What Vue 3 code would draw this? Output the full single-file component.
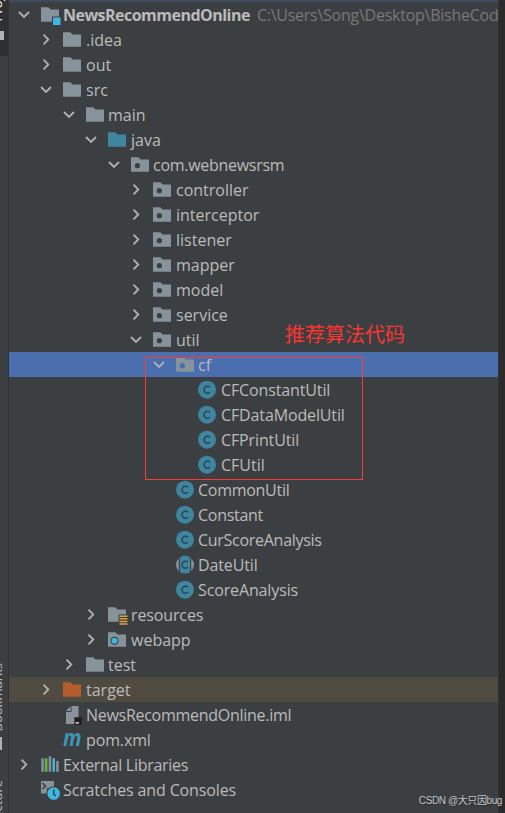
<script setup>
const folder = 'folder';
const pkg = 'package';

const rows = [
  { name: 'NewsRecommendOnline', level: 0, icon: 'module', arrow: 'down', path: 'C:\\Users\\Song\\Desktop\\BisheCode' },
  { name: '.idea', level: 1, icon: folder, arrow: 'right' },
  { name: 'out', level: 1, icon: folder, arrow: 'right' },
  { name: 'src', level: 1, icon: folder, arrow: 'down' },
  { name: 'main', level: 2, icon: folder, arrow: 'down' },
  { name: 'java', level: 3, icon: 'source', arrow: 'down' },
  { name: 'com.webnewsrsm', level: 4, icon: pkg, arrow: 'down', tight: true },
  { name: 'controller', level: 5, icon: pkg, arrow: 'right' },
  { name: 'interceptor', level: 5, icon: pkg, arrow: 'right' },
  { name: 'listener', level: 5, icon: pkg, arrow: 'right' },
  { name: 'mapper', level: 5, icon: pkg, arrow: 'right' },
  { name: 'model', level: 5, icon: pkg, arrow: 'right' },
  { name: 'service', level: 5, icon: pkg, arrow: 'right' },
  { name: 'util', level: 5, icon: pkg, arrow: 'down' },
  { name: 'cf', level: 6, icon: pkg, arrow: 'down', state: 'selected' },
  { name: 'CFConstantUtil', level: 7, icon: 'class', snug: true },
  { name: 'CFDataModelUtil', level: 7, icon: 'class', snug: true },
  { name: 'CFPrintUtil', level: 7, icon: 'class', snug: true },
  { name: 'CFUtil', level: 7, icon: 'class' },
  { name: 'CommonUtil', level: 6, icon: 'class', tight: true },
  { name: 'Constant', level: 6, icon: 'class', tight: true },
  { name: 'CurScoreAnalysis', level: 6, icon: 'class', tight: true },
  { name: 'DateUtil', level: 6, icon: 'abstract', snug: true },
  { name: 'ScoreAnalysis', level: 6, icon: 'class', snug: true },
  { name: 'resources', level: 3, icon: 'resources', arrow: 'right', snug: true },
  { name: 'webapp', level: 3, icon: 'web', arrow: 'right' },
  { name: 'test', level: 2, icon: folder, arrow: 'right' },
  { name: 'target', level: 1, icon: 'excluded', arrow: 'right', state: 'ignored' },
  { name: 'NewsRecommendOnline.iml', level: 1, icon: 'iml', tight: true },
  { name: 'pom.xml', level: 1, icon: 'maven', snug: true },
  { name: 'External Libraries', level: 0, icon: 'libraries', arrow: 'right', tight: true },
  { name: 'Scratches and Consoles', level: 0, icon: 'scratches', snug: true }
];

const folderLike = ['folder', 'package', 'module', 'source', 'resources', 'web', 'excluded'];
const isFolder = (icon) => folderLike.includes(icon);

// Each level is 22.5px deep, kept on whole pixels so icons stay crisp
const indent = (level) => `${Math.floor(level * 22.5) + 8}px`;
</script>

<template>
  <div class="window">
    <aside class="stripe">
      <div class="stripe-tab">
        <span class="tab-text">Project</span>
        <i class="tab-icon"></i>
      </div>
      <div class="stripe-bottom">
        <span class="tab-text">Bookmarks</span>
        <i class="tab-icon"></i>
        <span class="tab-text">Structure</span>
      </div>
    </aside>

    <main class="tree">
      <div
        v-for="row in rows"
        :key="row.name"
        class="row"
        :class="[row.state, { root: row.path, snug: row.snug, tight: row.tight, odd: row.level % 2 }]"
        :style="{ paddingLeft: indent(row.level) }"
      >
        <svg class="arrow" viewBox="0 0 14 14">
          <path v-if="row.arrow === 'down'" d="M2 4 7 9l5-5" />
          <path v-if="row.arrow === 'right'" d="M4.500 1.700 9.300 6.500l-4.800 4.800" />
        </svg>

        <svg class="icon" :class="row.icon" viewBox="0 0 20 21">
          <template v-if="isFolder(row.icon)">
            <path class="shape" d="M0 3.300h7.300l2.300 2.200H18v12.300H0z" />
            <circle v-if="row.icon === 'package'" class="hole" cx="6.400" cy="11.700" r="2.600" />
            <path v-if="row.icon === 'module'" class="gap" d="M11 12.500h9V21h-9z" />
            <path v-if="row.icon === 'module'" class="cyan" d="M12 13.500h7.500V21H12z" />
            <template v-if="row.icon === 'resources'">
              <path class="gap" d="M10.500 10.500H20V21h-9.500z" />
              <path class="lines" d="M11.500 12.200h8M11.500 14.800h8M11.500 17.400h8M11.500 20h8" />
            </template>
            <template v-if="row.icon === 'web'">
              <circle class="hole" cx="6.500" cy="11.700" r="4" />
              <circle class="cyan" cx="6.500" cy="11.700" r="3" />
            </template>
          </template>
          <template v-else-if="row.icon === 'class'">
            <circle class="disc" cx="9" cy="10.700" r="9" />
            <path class="letter" d="M12 8.300A3.500 3.500 0 1 0 12 13.100" />
          </template>
          <template v-else-if="row.icon === 'abstract'">
            <path class="disc" d="M4 3.200q5-2.800 10 0v15q-5 2.800-10 0z" />
            <path class="bracket" d="M2.800 4.200q-5.600 6.500 0 13zM15.200 4.200q5.600 6.500 0 13z" />
            <path class="letter" d="M12 8.300A3.500 3.500 0 1 0 12 13.100" />
          </template>
          <template v-else-if="row.icon === 'iml'">
            <path class="shape" d="M8.500 2H15.500V20H3V8h5.500z" />
            <path class="shape" d="M3 7 7.500 2.300V7z" />
            <path class="black" d="M11.300 13.300h7.500v7.500h-7.500z" />
            <path class="white" d="M12.500 18.300h3.500v1.200h-3.500z" />
          </template>
          <text v-else-if="row.icon === 'maven'" class="maven-letter" x="0" y="17.300" textLength="18.500" lengthAdjust="spacingAndGlyphs">m</text>
          <template v-else-if="row.icon === 'libraries'">
            <path class="shape" d="M.300 4.300h2.500v13.400H.300zM7.700 2.300h2.500v15.400H7.700zM15.200 7h2.500v10.700h-2.500z" />
            <path class="green" d="M3.700 4.300h2.800v13.400H3.700z" />
            <path class="cyan" d="M11.500 4.300H14v13.400h-2.500z" />
          </template>
          <template v-else>
            <path class="shape" d="M0 2h13v12.500H0z" />
            <path class="prompt" d="m1.500 4 3 3-3 3M5.500 10h3" />
            <circle class="gap" cx="12.700" cy="14.500" r="7.300" />
            <circle class="cyan" cx="12.700" cy="14.500" r="6.300" />
            <path class="hand" d="M12.700 10.500V15l2 2" />
          </template>
        </svg>

        <span class="name">{{ row.name }}</span>
        <span v-if="row.path" class="path">{{ row.path }}</span>
      </div>

      <div class="frame"></div>
      <div class="note">推荐算法代码</div>
    </main>
    <div class="edge"></div>
    <div class="watermark">CSDN @大只因bug</div>
  </div>
</template>

<style>
body {
  background: #3c3f41;
}
</style>

<style scoped>
.window {
  position: relative;
  display: flex;
  width: 505px;
  height: 813px;
  overflow: hidden;
  background: #3c3f41;
  color: #bbbbbb;
  font-family: "Open Sans", "Noto Sans", sans-serif;
  font-size: 16px;
}

.stripe {
  display: flex;
  flex: none;
  flex-direction: column;
  justify-content: space-between;
  box-sizing: border-box;
  width: 9px;
  border-right: 1px solid #323232;
  overflow: hidden;
}

.stripe-tab {
  display: flex;
  flex-direction: column;
  align-items: flex-end;
  justify-content: flex-end;
  height: 56px;
  background: #2d2f30;
  color: #ffffff;
}

.stripe-bottom {
  display: flex;
  flex-direction: column;
  align-items: flex-end;
  height: 150px;
}

.tab-text {
  flex: none;
  width: 20px;
  margin-right: 1px;
  font-size: 13px;
  line-height: 20px;
  white-space: nowrap;
  writing-mode: vertical-rl;
  transform: rotate(180deg);
}

.tab-icon {
  flex: none;
  width: 4px;
  height: 9px;
  margin: 10px 4px 16px 0;
  background: #afb1b3;
}

.stripe-bottom .tab-icon {
  width: 2px;
  height: 13px;
  margin: 6px 6px 30px 0;
}

.tree {
  position: relative;
  flex: 1;
  min-width: 0;
  overflow: hidden;
  border-top: 2px solid #3d4b5c;
}

.row {
  display: flex;
  align-items: center;
  box-sizing: border-box;
  height: 25px;
  white-space: nowrap;
}

.row.selected {
  background: #4b6eaf;
}

.row.ignored {
  background: #4f4b41;
}

.arrow {
  flex: none;
  width: 14px;
  height: 14px;
  margin-right: 10px;
  fill: none;
  stroke: #afb1b3;
  stroke-width: 1.8;
}

.icon {
  flex: none;
  width: 20px;
  height: 21px;
  margin-right: 2px;
}

.odd .icon {
  margin-right: 3px;
}

.name,
.path {
  margin-top: 2px;
  line-height: 25px;
}

.snug .name {
  letter-spacing: -0.13px;
}

.tight .name {
  letter-spacing: -0.28px;
}

.root .name {
  font-weight: 700;
  letter-spacing: -0.52px;
}

.path {
  margin-left: 7px;
  color: #787878;
  letter-spacing: -0.25px;
}

.shape {
  fill: #87939a;
}

.source .shape {
  fill: #3e86a0;
}

.excluded .shape {
  fill: #b35c2e;
}

.hole,
.gap {
  fill: #3c3f41;
}

.selected .hole {
  fill: #4b6eaf;
}

.cyan {
  fill: #40b6e0;
}

.green {
  fill: #62b543;
}

.black {
  fill: #231f20;
}

.white {
  fill: #ffffff;
}

.disc {
  fill: #3e86a0;
}

.bracket {
  fill: #87939a;
}

.letter,
.lines,
.prompt,
.hand {
  fill: none;
  stroke: #2b4551;
  stroke-width: 1.5;
}

.lines {
  stroke: #d9a343;
}

.prompt {
  stroke: #3c3f41;
}

.maven-letter {
  fill: #3e94b4;
  font-size: 23px;
  font-style: italic;
  font-weight: 700;
}

.frame {
  position: absolute;
  top: 355px;
  left: 136px;
  box-sizing: border-box;
  width: 218px;
  height: 123px;
  border: 1px solid #fa3a37;
}

.note {
  position: absolute;
  top: 318px;
  left: 276px;
  color: #fa3530;
  font-family: "Noto Sans CJK SC", sans-serif;
  font-size: 20px;
  line-height: 28px;
}

.edge {
  flex: none;
  box-sizing: border-box;
  width: 7px;
  border-left: 1px solid #323232;
  background: #2b2b2b;
}

.watermark {
  position: absolute;
  right: 3px;
  bottom: 4px;
  color: #c4c5c6;
  font-family: "Liberation Sans", "Noto Sans CJK SC", sans-serif;
  font-size: 10px;
  letter-spacing: -0.4px;
  line-height: 16px;
  text-shadow: 1px 1px 1px #2b2b2b;
  white-space: nowrap;
}
</style>
